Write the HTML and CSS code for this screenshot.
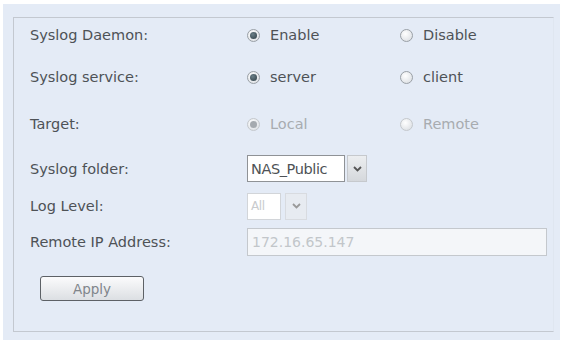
FILE: index.html
```html
<!DOCTYPE html>
<html lang="en">
<head>
    <meta charset="UTF-8">
    <title>Syslog</title>
    <link rel="stylesheet" href="styles.css">
</head>
<body>
    <div class="page">
        <div class="panel">
            <div class="row r1">
                <div class="label">Syslog Daemon:</div>
                <div class="opt"><span class="radio on"></span>Enable</div>
                <div class="opt"><span class="radio"></span>Disable</div>
            </div>
            <div class="row r2">
                <div class="label">Syslog service:</div>
                <div class="opt"><span class="radio on"></span>server</div>
                <div class="opt"><span class="radio"></span>client</div>
            </div>
            <div class="row r3">
                <div class="label">Target:</div>
                <div class="opt disabled"><span class="radio on"></span>Local</div>
                <div class="opt disabled"><span class="radio"></span>Remote</div>
            </div>
            <div class="row r4">
                <div class="label">Syslog folder:</div>
                <div class="select">
                    <span class="value">NAS_Public</span>
                    <span class="arrow"><svg width="9" height="6" viewBox="0 0 9 6"><path d="M1 1l3.5 3.5L8 1" fill="none" stroke="#555" stroke-width="1.8"/></svg></span>
                </div>
            </div>
            <div class="row r5">
                <div class="label">Log Level:</div>
                <div class="select small">
                    <span class="value">All</span>
                    <span class="arrow"><svg width="9" height="6" viewBox="0 0 9 6"><path d="M1 1l3.5 3.5L8 1" fill="none" stroke="#999" stroke-width="1.8"/></svg></span>
                </div>
            </div>
            <div class="row r6">
                <div class="label">Remote IP Address:</div>
                <div class="input">172.16.65.147</div>
            </div>
            <button class="apply">Apply</button>
        </div>
    </div>
</body>
</html>
```

FILE: styles.css
```css
* {
  margin: 0;
  padding: 0;
  box-sizing: border-box;
}
body {
  background: #fff;
  font-family: "DejaVu Sans", Verdana, sans-serif;
  font-size: 14.5px;
  color: #4e5256;
}
.page {
  margin: 4px 7px 0 3px;
  height: 336px;
  background: #e4ebf6;
  padding: 13px 6px 8px 10px;
}
.panel {
  border: 1px solid #c3c8d0;
  border-right-color: #dfe6f0;
  height: 315px;
  padding: 0 0 0 16px;
}
.row {
  display: flex;
  align-items: center;
}
.label {
  width: 217px;
}
.r1 { height: 34px; }
.r2 { height: 50px; }
.r3 { height: 44px; }
.r4 { height: 45px; }
.r5 { height: 30px; }
.r6 { height: 42px; }
.opt {
  width: 153px;
  display: flex;
  align-items: center;
}
.radio {
  width: 13px;
  height: 13px;
  border-radius: 50%;
  border: 1px solid #9aa0a6;
  background: radial-gradient(circle at 40% 35%, #fff, #d6dadf);
  margin-right: 10px;
  position: relative;
}
.radio.on::after {
  content: "";
  position: absolute;
  left: 2px;
  top: 2px;
  width: 7px;
  height: 7px;
  border-radius: 50%;
  background: radial-gradient(circle at 40% 35%, #6b7f88, #2f3f46);
}
.disabled {
  color: #a8acb0;
}
.disabled .radio {
  border-color: #c4c8cc;
}
.disabled .radio.on::after {
  background: #a5aaaf;
}
.select {
  display: flex;
  height: 27px;
}
.select .value {
  width: 98px;
  background: #fff;
  border: 1px solid #8f9296;
  padding: 0 3px;
  display: flex;
  align-items: center;
  color: #4e5256;
  letter-spacing: -0.4px;
}
.select .arrow {
  width: 20px;
  background: linear-gradient(#eceef0, #d5d8dc);
  border: 1px solid #c6c9cd;
  display: flex;
  align-items: center;
  justify-content: center;
  margin-left: 2px;
}
.select.small .value {
  width: 34px;
  border-color: #d2d5d9;
  color: #c8cbce;
  font-size: 12px;
}
.select.small .arrow {
  width: 22px;
  background: #e7ebf1;
  border-color: #d8dbe0;
  margin-left: 4px;
}
.input {
  width: 300px;
  height: 28px;
  border: 1px solid #c4c8cd;
  background: #f4f6f9;
  color: #c2c6ca;
  padding: 0 4px;
  display: flex;
  align-items: center;
  font-size: 14px;
}
.apply {
  margin: 13px 0 0 10px;
  width: 104px;
  height: 25px;
  border: 1px solid #5d6166;
  border-radius: 3px;
  background: linear-gradient(#fbfbfc, #dcdfe3);
  font-family: "DejaVu Sans", Verdana, sans-serif;
  font-size: 13.5px;
  color: #80858b;
}
```
